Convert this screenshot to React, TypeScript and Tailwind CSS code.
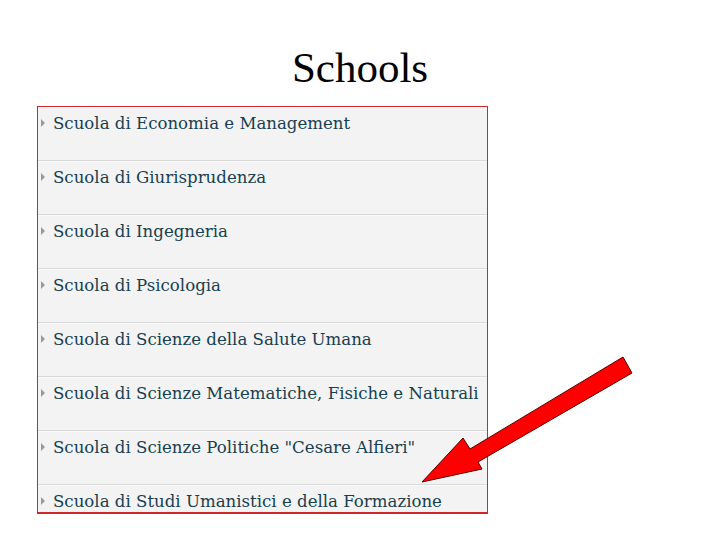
const schools = [
  'Scuola di Economia e Management',
  'Scuola di Giurisprudenza',
  'Scuola di Ingegneria',
  'Scuola di Psicologia',
  'Scuola di Scienze della Salute Umana',
  'Scuola di Scienze Matematiche, Fisiche e Naturali',
  'Scuola di Scienze Politiche "Cesare Alfieri"',
  'Scuola di Studi Umanistici e della Formazione',
];

export default function App() {
  return (
    <div className="relative w-[720px] h-[540px] bg-white overflow-hidden">
      <h1 className="pt-[40px] text-center text-[43px] leading-[56px] font-normal text-black font-['Times_New_Roman',Times,serif]">
        Schools
      </h1>
      <div className="mt-[10px] ml-[37px] w-[451px] h-[408px] border-x border-t border-b-2 border-solid border-[color:#d0262c] overflow-hidden bg-[#f3f3f3]">
        {schools.map((name) => (
          <div
            key={name}
            className="flex h-[54px] items-start pl-[3px] pt-[5px] border-b border-[color:#d9d9d9] shadow-[inset_0_1px_0_#fbfbfb]"
          >
            <span className="mt-[7px] mr-[8px] w-0 h-0 border-y-[4px] border-y-transparent border-l-[4px] border-l-[#9a9a9a]" />
            <span className="text-[16.6px] leading-[24px] text-[#183f50] whitespace-nowrap font-['DejaVu_Serif',serif]">
              {name}
            </span>
          </div>
        ))}
      </div>
      <svg className="absolute left-0 top-0" width="720" height="540">
        <polygon
          points="623,357 632,373 478,462 482,469 422,482 463,438 470,449"
          fill="#ff0000"
          stroke="#5a0000"
          strokeWidth="1"
          strokeLinejoin="miter"
        />
      </svg>
    </div>
  );
}
